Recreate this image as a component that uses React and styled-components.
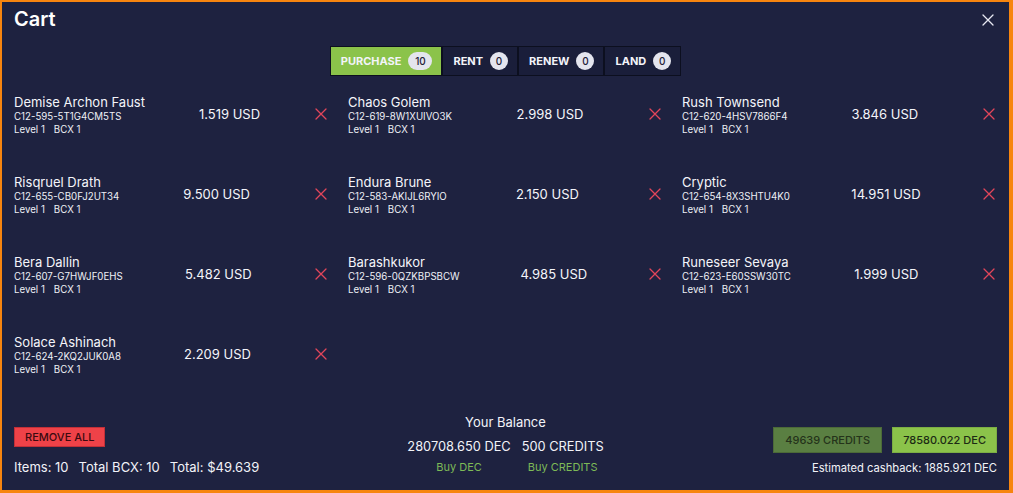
import React from 'react';
import styled, { createGlobalStyle } from 'styled-components';

const GlobalStyle = createGlobalStyle`
    html, body {
        margin: 0;
        padding: 0;
        background: #1e2240;
    }
    * {
        box-sizing: border-box;
    }
`;

const items = [
    { name: 'Demise Archon Faust', uid: 'C12-595-5T1G4CM5TS', price: '1.519' },
    { name: 'Chaos Golem', uid: 'C12-619-8W1XUIVO3K', price: '2.998' },
    { name: 'Rush Townsend', uid: 'C12-620-4HSV7866F4', price: '3.846' },
    { name: 'Risqruel Drath', uid: 'C12-655-CB0FJ2UT34', price: '9.500' },
    { name: 'Endura Brune', uid: 'C12-583-AKIJL6RYIO', price: '2.150' },
    { name: 'Cryptic', uid: 'C12-654-8X3SHTU4K0', price: '14.951' },
    { name: 'Bera Dallin', uid: 'C12-607-G7HWJF0EHS', price: '5.482' },
    { name: 'Barashkukor', uid: 'C12-596-0QZKBPSBCW', price: '4.985' },
    { name: 'Runeseer Sevaya', uid: 'C12-623-E60SSW30TC', price: '1.999' },
    { name: 'Solace Ashinach', uid: 'C12-624-2KQ2JUK0A8', price: '2.209' },
];

const tabs = [
    { label: 'PURCHASE', count: 10, active: true },
    { label: 'RENT', count: 0 },
    { label: 'RENEW', count: 0 },
    { label: 'LAND', count: 0 },
];

const CrossIcon = ({ color = '#e2465a', width = 1.3 }) => (
    <svg width='14' height='14' viewBox='0 0 14 14'>
        <path d='M2 2 L12 12 M12 2 L2 12' stroke={color} strokeWidth={width} strokeLinecap='round' />
    </svg>
);

const CloseIcon = () => (
    <svg width='12' height='12' viewBox='0 0 12 12'>
        <path d='M1 1 L11 11 M11 1 L1 11' stroke='#e8e9f2' strokeWidth='1.3' strokeLinecap='round' />
    </svg>
);

const Cart = () => {
    return (
        <Wrapper>
            <Header>
                <Title>Cart</Title>
                <CloseButton>
                    <CloseIcon />
                </CloseButton>
            </Header>

            <Tabs>
                {tabs.map((tab) => (
                    <Tab key={tab.label} $active={tab.active}>
                        {tab.label}
                        <Badge $wide={tab.count > 9}>{tab.count}</Badge>
                    </Tab>
                ))}
            </Tabs>

            <Grid>
                {items.map((item) => (
                    <Item key={item.uid}>
                        <Info>
                            <Name>{item.name}</Name>
                            <Uid>{item.uid}</Uid>
                            <Meta>
                                <span>Level 1</span>
                                <span>BCX 1</span>
                            </Meta>
                        </Info>
                        <Price>{item.price} USD</Price>
                        <RemoveButton>
                            <CrossIcon />
                        </RemoveButton>
                    </Item>
                ))}
            </Grid>

            <Footer>
                <FooterLeft>
                    <RemoveAll>REMOVE ALL</RemoveAll>
                    <Totals>
                        <span>Items: 10</span>
                        <span>Total BCX: 10</span>
                        <span>Total: $49.639</span>
                    </Totals>
                </FooterLeft>

                <Balance>
                    <BalanceTitle>Your Balance</BalanceTitle>
                    <BalanceGrid>
                        <Amount>280708.650 DEC</Amount>
                        <Amount>500 CREDITS</Amount>
                        <BuyLink>Buy DEC</BuyLink>
                        <BuyLink>Buy CREDITS</BuyLink>
                    </BalanceGrid>
                </Balance>

                <FooterRight>
                    <PayButtons>
                        <PayButton $variant='credits'>49639 CREDITS</PayButton>
                        <PayButton>78580.022 DEC</PayButton>
                    </PayButtons>
                    <Cashback>Estimated cashback: 1885.921 DEC</Cashback>
                </FooterRight>
            </Footer>
        </Wrapper>
    );
};

const Wrapper = styled.div`
    height: 493px;
    width: 1013px;
    display: flex;
    flex-direction: column;
    background: #1e2240;
    border-style: solid;
    border-color: #f7850f;
    border-width: 2px 4px 3px 2px;
    font-family: Inter, 'Noto Sans', sans-serif;
    color: #f2f3f8;
`;

const Header = styled.div`
    display: flex;
    justify-content: space-between;
    align-items: center;
    padding: 3px 15px 0 12px;
    height: 30px;
`;

const Title = styled.h1`
    margin: 0;
    font-size: 20px;
    font-weight: 600;
    line-height: 24px;
    color: #ffffff;
`;

const CloseButton = styled.div`
    display: flex;
    align-items: center;
    margin-top: 2px;
`;

const Tabs = styled.div`
    display: flex;
    justify-content: center;
    margin-top: 14px;
`;

const Tab = styled.div`
    display: flex;
    align-items: center;
    gap: 7px;
    height: 30px;
    padding: 0 9px 0 10px;
    border: 1px solid #0c0f1f;
    background: ${(p) => (p.$active ? '#8bc34a' : '#1a1e3a')};
    color: #f3f4fa;
    font-size: 11px;
    font-weight: 700;
`;

const Badge = styled.span`
    display: inline-flex;
    align-items: center;
    justify-content: center;
    height: 18px;
    min-width: ${(p) => (p.$wide ? '24px' : '18px')};
    padding: 0 4px;
    border-radius: 9px;
    background: #e4e5ee;
    color: #1d2036;
    font-size: 10px;
    font-weight: 500;
`;

const Grid = styled.div`
    display: grid;
    grid-template-columns: repeat(3, 1fr);
    column-gap: 20px;
    row-gap: 38px;
    padding: 0 13px 0 12px;
    margin-top: 18px;
`;

const Item = styled.div`
    display: flex;
    justify-content: space-between;
    align-items: center;
`;

const Info = styled.div`
    display: flex;
    flex-direction: column;
`;

const Name = styled.div`
    font-size: 13px;
    line-height: 16px;
    color: #f4f5fa;
`;

const Uid = styled.div`
    font-size: 9.7px;
    line-height: 13px;
    color: #eef0f6;
`;

const Meta = styled.div`
    display: flex;
    gap: 9px;
    font-size: 9.7px;
    line-height: 13px;
    color: #eef0f6;
`;

const Price = styled.div`
    font-size: 13px;
    color: #f4f5fa;
    margin-top: -2px;
`;

const RemoveButton = styled.div`
    display: flex;
    align-items: center;
    margin-top: -2px;
`;

const Footer = styled.div`
    margin-top: auto;
    display: grid;
    grid-template-columns: 1fr 1fr 1fr;
    align-items: end;
    padding: 0 12px 15px 12px;
`;

const FooterLeft = styled.div`
    display: flex;
    flex-direction: column;
    align-items: flex-start;
    gap: 12px;
`;

const RemoveAll = styled.button`
    height: 20px;
    padding: 0 10px;
    border: 1px solid #c23038;
    background: #ee4248;
    color: #3b0a10;
    font-family: Inter, sans-serif;
    font-size: 11px;
    font-weight: 500;
`;

const Totals = styled.div`
    display: flex;
    gap: 10px;
    font-size: 13px;
    line-height: 16px;
`;

const Balance = styled.div`
    display: flex;
    flex-direction: column;
    align-items: center;
    padding-bottom: 1px;
`;

const BalanceTitle = styled.div`
    font-size: 13px;
    line-height: 16px;
    margin-bottom: 9px;
`;

const BalanceGrid = styled.div`
    display: grid;
    grid-template-columns: auto auto;
    column-gap: 11px;
    row-gap: 5px;
    justify-items: center;
`;

const Amount = styled.div`
    font-size: 12.8px;
    line-height: 16px;
`;

const BuyLink = styled.div`
    font-size: 11px;
    line-height: 14px;
    color: #7dba57;
`;

const FooterRight = styled.div`
    display: flex;
    flex-direction: column;
    align-items: flex-end;
    gap: 8px;
`;

const PayButtons = styled.div`
    display: flex;
    gap: 10px;
`;

const PayButton = styled.button`
    height: 26px;
    padding: 0 ${(p) => (p.$variant === 'credits' ? '11px' : '10px')};
    border: 1px solid ${(p) => (p.$variant === 'credits' ? '#4c6a38' : '#7cae44')};
    background: ${(p) => (p.$variant === 'credits' ? '#5a7f42' : '#8bc34a')};
    color: ${(p) => (p.$variant === 'credits' ? '#24331a' : '#1c2a14')};
    font-family: Inter, sans-serif;
    font-size: 11px;
    font-weight: 500;
`;

const Cashback = styled.div`
    font-size: 11.2px;
    line-height: 14px;
`;

const App = () => (
    <>
        <GlobalStyle />
        <Cart />
    </>
);

export default App;
